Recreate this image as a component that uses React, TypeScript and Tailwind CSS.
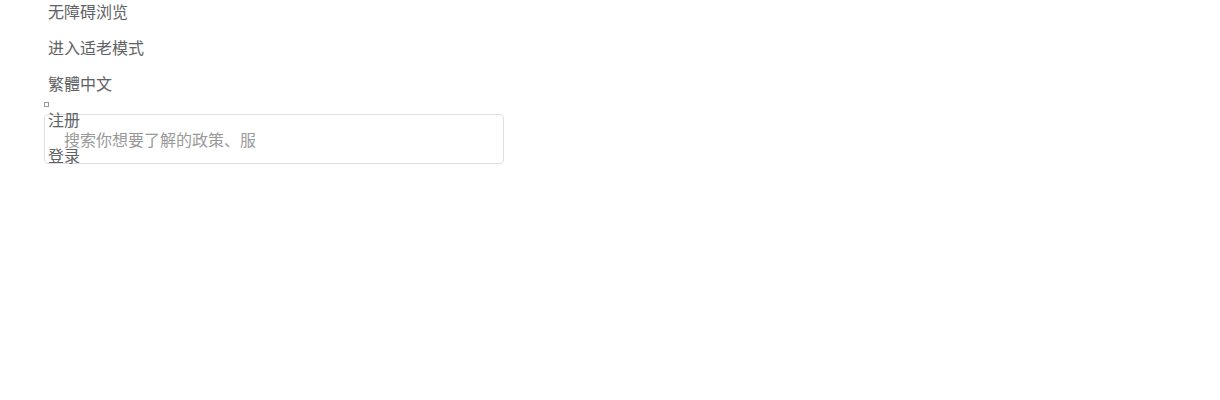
import React from "react";

export default function App() {
  const items = ["无障碍浏览", "进入适老模式", "繁體中文", "注册", "登录"];
  return (
    <div
      className="relative w-[1220px] h-[400px] bg-white"
      style={{ fontFamily: '"Noto Sans CJK SC", "Noto Sans", sans-serif' }}
    >
      <div className="absolute left-[44px] top-[114px] w-[460px] h-[50px] border border-[#dcdfe6] rounded-[4px] flex items-center pl-[19px]">
        <span className="text-[16px] text-[#999999]">搜索你想要了解的政策、服</span>
      </div>
      <span className="absolute left-[44px] top-[102px] w-[5px] h-[5px] border border-[#999] bg-white" />
      <ul className="relative pl-12">
        {items.map((t) => (
          <li key={t} className="text-[16px] leading-[22px] mb-[14px] text-[#606266]">
            {t}
          </li>
        ))}
      </ul>
    </div>
  );
}
